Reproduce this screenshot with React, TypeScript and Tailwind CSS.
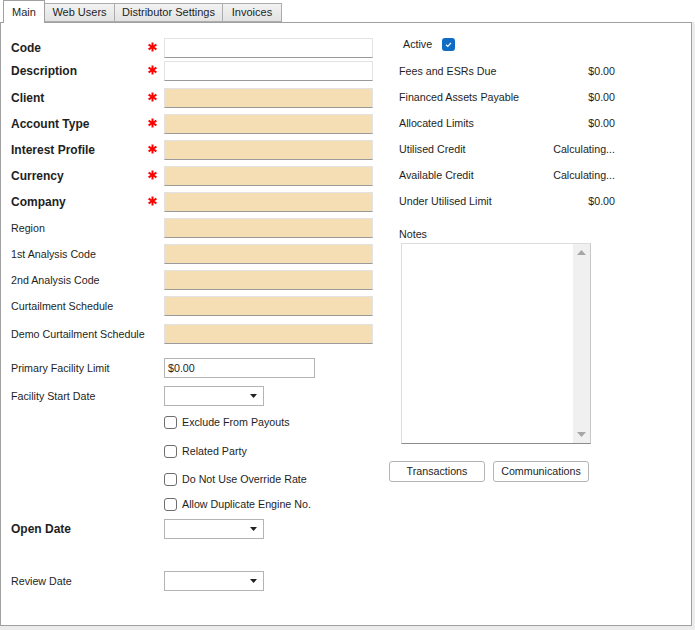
import React from "react";

const Star = () => (
  <svg width="9" height="10" viewBox="0 0 9 10" className="block">
    <g stroke="#ff0000" strokeWidth="2" strokeLinecap="butt">
      <line x1="4.5" y1="0.5" x2="4.5" y2="9.5" />
      <line x1="0.6" y1="2.7" x2="8.4" y2="7.3" />
      <line x1="0.6" y1="7.3" x2="8.4" y2="2.7" />
    </g>
  </svg>
);

const Field = ({ tan }: { tan?: boolean }) => (
  <div
    className={
      "w-[209px] h-[20px] border border-[#e3e3e3] border-b-[#9a9a9a] " +
      (tan ? "bg-[#f5deb3]" : "bg-white")
    }
  />
);

const Combo = () => (
  <div className="w-[100px] h-[20px] border border-[#b4b4b4] bg-white flex items-center justify-end pr-[6px]">
    <svg width="7" height="4" viewBox="0 0 7 4">
      <path d="M0 0 L7 0 L3.5 4 Z" fill="#222" />
    </svg>
  </div>
);

const Check = ({ label }: { label: string }) => (
  <div className="flex items-center h-[13px]">
    <div className="w-[13px] h-[13px] border border-[#6e6e6e] rounded-[3px] bg-white" />
    <span className="ml-[5px] leading-none whitespace-nowrap">{label}</span>
  </div>
);

const Row = ({
  label,
  bold,
  star,
  children,
  cls,
}: {
  label: string;
  bold?: boolean;
  star?: boolean;
  children: React.ReactNode;
  cls: string;
}) => (
  <div className={"flex items-center h-[20px] " + cls}>
    <div className={"w-[137px] whitespace-nowrap " + (bold ? "font-bold text-[12px]" : "")}>{label}</div>
    <div className="w-[16px] flex items-center -mt-[2px]">{star ? <Star /> : null}</div>
    {children}
  </div>
);

const Stat = ({ label, value }: { label: string; value: string }) => (
  <div className="flex items-center justify-between h-[26px] w-[226px] pl-[10px]">
    <span>{label}</span>
    <span>{value}</span>
  </div>
);

export default function App() {
  return (
    <div className="w-[695px] h-[630px] bg-white flex flex-col font-['Liberation_Sans',Arial,sans-serif] text-[10.7px] text-[#1e1e1e]">
      <div className="h-[22px] flex items-end pl-[3px] text-[11px]">
        <div className="relative z-10 -mb-px w-[42px] h-[23px] bg-white border border-b-0 border-[#a0a0a0] flex items-center justify-center">
          Main
        </div>
        <div className="w-[70px] h-[19px] bg-gradient-to-b from-[#f2f2f2] to-[#e3e3e3] border border-[#acacac] border-l-0 flex items-center justify-center">
          Web Users
        </div>
        <div className="w-[108px] h-[19px] bg-gradient-to-b from-[#f2f2f2] to-[#e3e3e3] border border-[#acacac] border-l-0 flex items-center justify-center">
          Distributor Settings
        </div>
        <div className="w-[59px] h-[19px] bg-gradient-to-b from-[#f2f2f2] to-[#e3e3e3] border border-[#acacac] border-l-0 flex items-center justify-center">
          Invoices
        </div>
      </div>
      <div className="flex-1 bg-[#ececec] pr-[3px] pb-[4px] flex">
        <div className="flex-1 bg-white border border-[#a0a0a0] flex">
          <div className="w-[372px] pl-[10px] flex flex-col">
            <Row label="Code" bold star cls="mt-[15px]"><Field /></Row>
            <Row label="Description" bold star cls="mt-[3px]"><Field /></Row>
            <Row label="Client" bold star cls="mt-[7px]"><Field tan /></Row>
            <Row label="Account Type" bold star cls="mt-[6px]"><Field tan /></Row>
            <Row label="Interest Profile" bold star cls="mt-[6px]"><Field tan /></Row>
            <Row label="Currency" bold star cls="mt-[6px]"><Field tan /></Row>
            <Row label="Company" bold star cls="mt-[6px]"><Field tan /></Row>
            <Row label="Region" cls="mt-[6px]"><Field tan /></Row>
            <Row label="1st Analysis Code" cls="mt-[6px]"><Field tan /></Row>
            <Row label="2nd Analysis Code" cls="mt-[6px]"><Field tan /></Row>
            <Row label="Curtailment Schedule" cls="mt-[6px]"><Field tan /></Row>
            <Row label="Demo Curtailment Schedule" cls="mt-[8px]"><Field tan /></Row>
            <Row label="Primary Facility Limit" cls="mt-[14px]">
              <div className="w-[151px] h-[20px] border border-[#b4b4b4] bg-white flex items-center pl-[3px]">$0.00</div>
            </Row>
            <Row label="Facility Start Date" cls="mt-[8px]"><Combo /></Row>
            <div className="pl-[153px] flex flex-col">
              <div className="mt-[10px]"><Check label="Exclude From Payouts" /></div>
              <div className="mt-[16px]"><Check label="Related Party" /></div>
              <div className="mt-[15px]"><Check label="Do Not Use Override Rate" /></div>
              <div className="mt-[12px]"><Check label="Allow Duplicate Engine No." /></div>
            </div>
            <Row label="Open Date" bold cls="mt-[8px]"><Combo /></Row>
            <Row label="Review Date" cls="mt-[32px]"><Combo /></Row>
          </div>
          <div className="ml-[16px] flex flex-col">
            <div className="mt-[15px] h-[13px] pl-[14px] flex items-center">
              <span className="w-[39px]">Active</span>
              <div className="w-[13px] h-[13px] rounded-[3px] bg-[#0f6cc5] flex items-center justify-center">
                <svg width="9" height="9" viewBox="0 0 9 9">
                  <path d="M2 4.8 L3.8 6.5 L7 2.8" stroke="white" strokeWidth="1.2" fill="none" />
                </svg>
              </div>
            </div>
            <div className="mt-[7px] flex flex-col">
              <Stat label="Fees and ESRs Due" value="$0.00" />
              <Stat label="Financed Assets Payable" value="$0.00" />
              <Stat label="Allocated Limits" value="$0.00" />
              <Stat label="Utilised Credit" value="Calculating..." />
              <Stat label="Available Credit" value="Calculating..." />
              <Stat label="Under Utilised Limit" value="$0.00" />
            </div>
            <div className="mt-[12px] h-[16px] pl-[10px] flex items-center">Notes</div>
            <div className="mt-[1px] ml-[12px] w-[190px] h-[201px] border border-[#dcdcdc] border-b-[#8c8c8c] border-r-[#c8c8c8] bg-white flex justify-end">
              <div className="w-[17px] h-full bg-[#f0f0f0] flex flex-col items-center justify-between py-[6px]">
                <svg width="9" height="5" viewBox="0 0 9 5"><path d="M0 5 L9 5 L4.5 0 Z" fill="#a6a6a6" /></svg>
                <svg width="9" height="5" viewBox="0 0 9 5"><path d="M0 0 L9 0 L4.5 5 Z" fill="#a6a6a6" /></svg>
              </div>
            </div>
            <div className="mt-[17px] flex gap-[8px]">
              <div className="w-[96px] h-[21px] border border-[#b4b4b4] rounded-[3px] bg-white flex items-center justify-center">Transactions</div>
              <div className="w-[96px] h-[21px] border border-[#b4b4b4] rounded-[3px] bg-white flex items-center justify-center">Communications</div>
            </div>
          </div>
        </div>
      </div>
    </div>
  );
}
